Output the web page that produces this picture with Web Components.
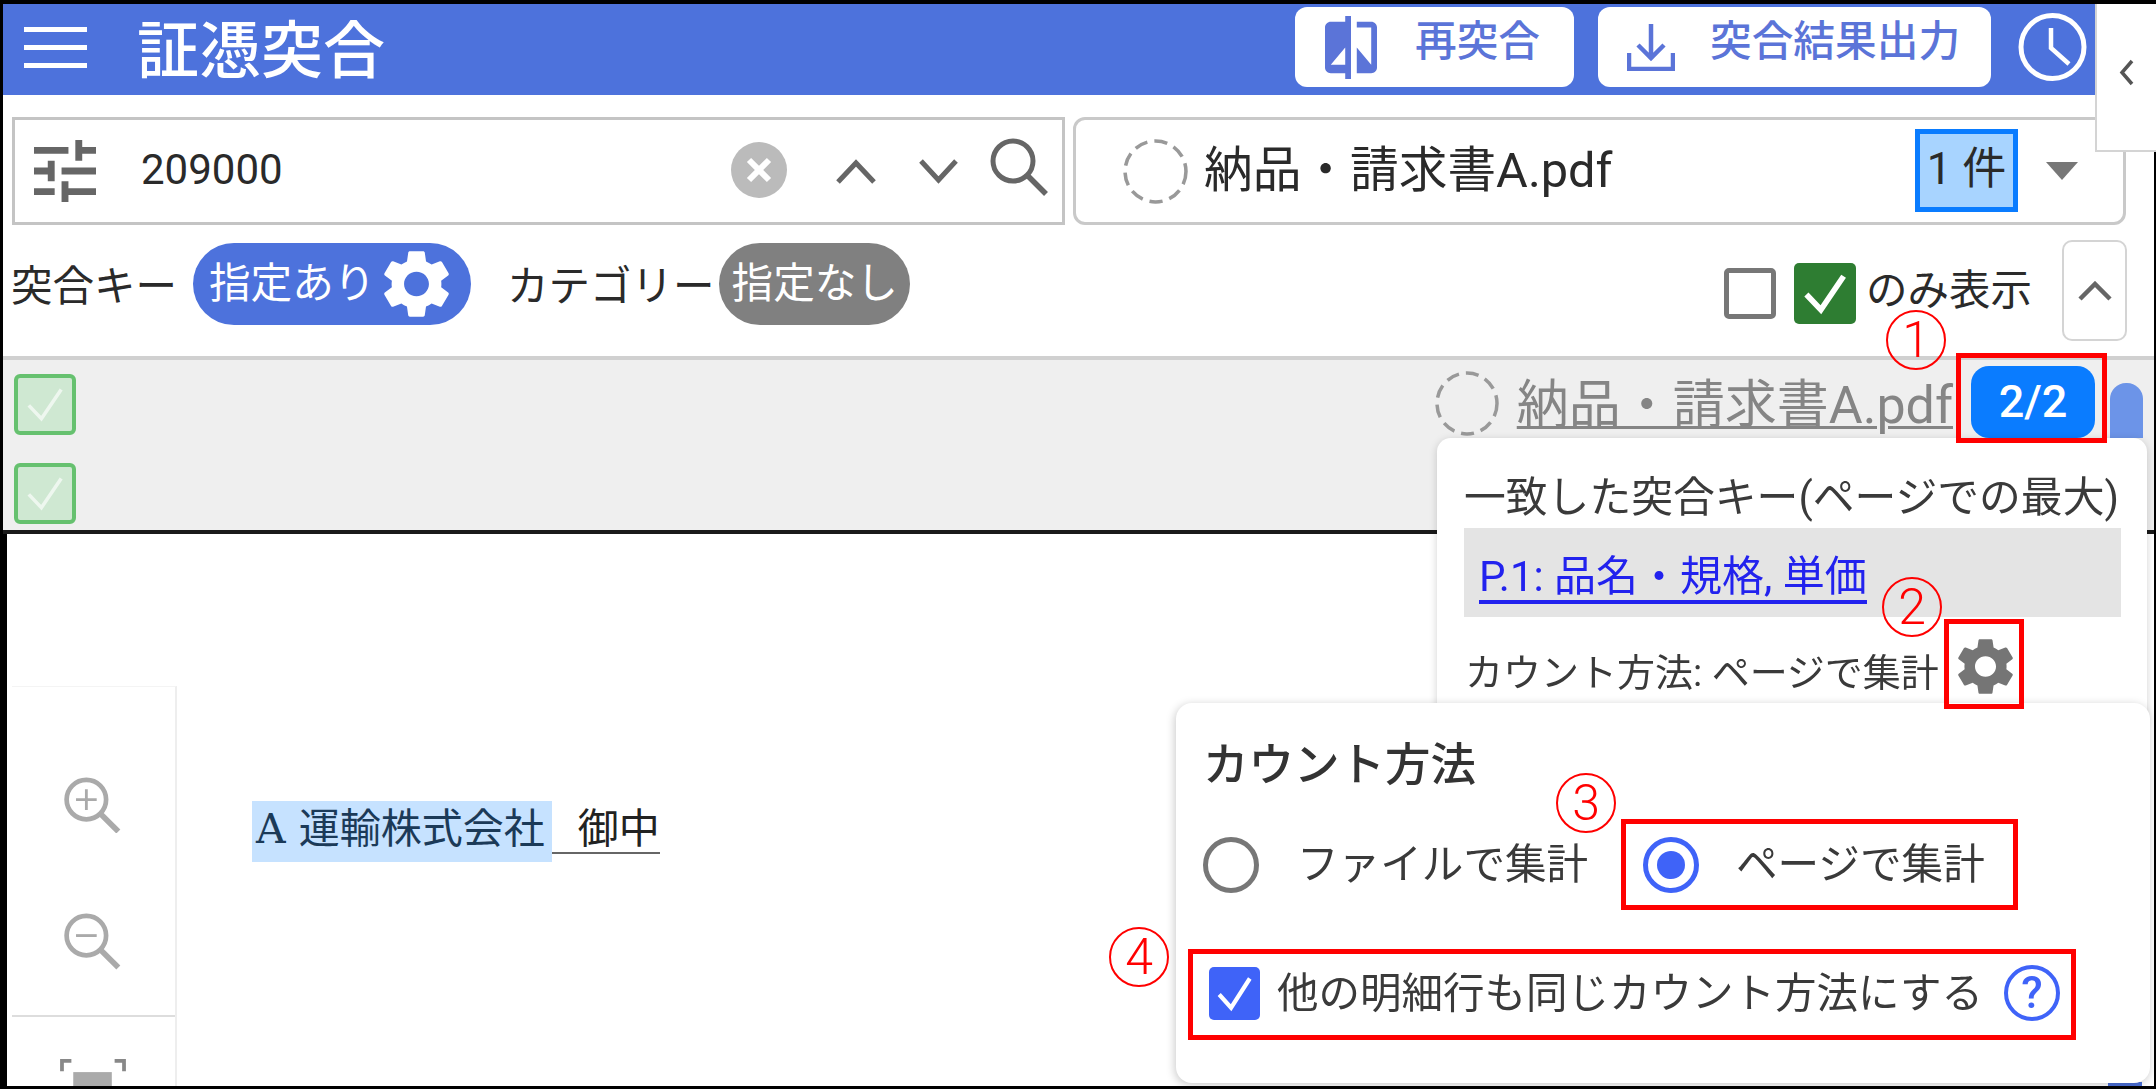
<!DOCTYPE html>
<html lang="ja">
<head>
<meta charset="utf-8">
<title>証憑突合</title>
<style>
html,body{margin:0;padding:0;background:#fff;overflow:hidden}
body{font-family:Roboto,"Noto Sans CJK JP",sans-serif;color:#333}
</style>
</head>
<body>
<page-frame>
  <app-shell>
    <app-header></app-header>
    <search-row></search-row>
    <filter-row></filter-row>
    <result-band></result-band>
    <doc-viewer></doc-viewer>
    <side-tab></side-tab>
    <peek-bar></peek-bar>
    <keys-popover></keys-popover>
    <count-popover></count-popover>
  </app-shell>
  <anno-box style="left:1956px;top:353px;width:151px;height:90px"></anno-box>
  <anno-box style="left:1944px;top:619px;width:80px;height:90px"></anno-box>
  <anno-box style="left:1621px;top:819px;width:397px;height:91px"></anno-box>
  <anno-box style="left:1188px;top:949px;width:888px;height:91px"></anno-box>
  <anno-num style="left:1886px;top:310px">1</anno-num>
  <anno-num style="left:1882px;top:577px">2</anno-num>
  <anno-num style="left:1556px;top:773px">3</anno-num>
  <anno-num style="left:1109px;top:927px">4</anno-num>
</page-frame>
<script>
const GEAR='M19.14 12.94c.04-.3.06-.61.06-.94 0-.32-.02-.64-.07-.94l2.03-1.58c.18-.14.23-.41.12-.61l-1.92-3.32c-.12-.22-.37-.29-.59-.22l-2.39.96c-.5-.38-1.03-.7-1.62-.94l-.36-2.54c-.04-.24-.24-.41-.48-.41h-3.84c-.24 0-.43.17-.47.41l-.36 2.54c-.59.24-1.13.57-1.62.94l-2.39-.96c-.22-.08-.47 0-.59.22L2.74 8.87c-.12.21-.08.47.12.61l2.03 1.58c-.05.3-.09.63-.09.94s.02.64.07.94l-2.03 1.58c-.18.14-.23.41-.12.61l1.92 3.32c.12.22.37.29.59.22l2.39-.96c.5.38 1.03.7 1.62.94l.36 2.54c.05.24.24.41.48.41h3.84c.24 0 .44-.17.47-.41l.36-2.54c.59-.24 1.13-.56 1.62-.94l2.39.96c.22.08.47 0 .59-.22l1.92-3.32c.12-.22.07-.47-.12-.61l-2.01-1.58zM12 15.6c-1.98 0-3.6-1.62-3.6-3.6s1.62-3.6 3.6-3.6 3.6 1.62 3.6 3.6-1.62 3.6-3.6 3.6z';
const gear=(w,h,c)=>`<svg width="${w}" height="${h}" viewBox="2.6 2 18.8 20" preserveAspectRatio="none" style="display:block;flex:none"><path fill="${c}" d="${GEAR}"/></svg>`;
const ring=(w,h)=>`<svg width="${w}" height="${h}" viewBox="0 0 64 66" preserveAspectRatio="none" style="display:block;flex:none"><circle cx="32" cy="33" r="30" fill="none" stroke="#999" stroke-width="3.5" stroke-dasharray="13 7"/></svg>`;
const check=(w,h,c,sw)=>`<svg width="${w}" height="${h}" viewBox="0 0 60 60" preserveAspectRatio="none" style="display:block"><path d="M12 31 L26 46 L48 13" fill="none" stroke="${c}" stroke-width="${sw}"/></svg>`;
function def(tag,html){
  customElements.define(tag,class extends HTMLElement{
    constructor(){super();const t=document.createElement('template');t.innerHTML=html;this.attachShadow({mode:'open'}).appendChild(t.content.cloneNode(true));}
  });
}
def('page-frame',`<style>:host{display:block;position:relative;width:2156px;height:1089px;overflow:hidden;background:#000}</style><slot></slot>`);
def('app-shell',`<style>:host{display:flex;flex-direction:column;position:relative;box-sizing:border-box;width:2156px;height:1089px;padding:4px 2px 3px 3px;filter:blur(.7px);font-family:Roboto,"Noto Sans CJK JP",sans-serif;color:#333;background:#000}
.in{display:flex;flex-direction:column;flex:1;min-height:0;background:#fff;overflow:hidden}</style><div class="in"><slot></slot></div>`);
def('header-btn',`<style>:host{display:flex;align-items:center;box-sizing:border-box;height:80px;margin-top:3px;background:#fff;border-radius:12px;color:#5b74d8;font-size:41.7px;font-weight:500;line-height:50px;white-space:nowrap;padding-left:var(--pad);flex:none}
.t{margin-left:var(--gap);margin-bottom:10px}</style><slot name="icon"></slot><span class="t"><slot></slot></span>`);
def('app-header',`<style>:host{display:flex;align-items:flex-start;height:91px;background:#4d72dc;color:#fff;flex:none}
.menu{display:flex;flex-direction:column;justify-content:space-between;width:63px;height:41px;margin:23px 0 0 21px}
.menu i{display:block;height:5px;background:#fff}
h1{margin:10px 0 0 50px;font-size:62px;line-height:76px;font-weight:500;flex:1;white-space:nowrap}
.clock{margin:8px 67px 0 27px;display:block;flex:none}
.b2{margin-left:24px}</style>
<div class="menu"><i></i><i></i><i></i></div><h1>証憑突合</h1>
<header-btn style="--pad:30px;--gap:38px;width:279px"><svg slot="icon" width="52" height="63" viewBox="3 1 18 22" preserveAspectRatio="none" style="display:block;flex:none"><path fill="#5b74d8" d="M10 3H5c-1.1 0-2 .9-2 2v14c0 1.1.9 2 2 2h5v2h2V1h-2v2zm0 15H5l5-6v6zm9-15h-5v2h5v13l-5-6v9h5c1.1 0 2-.9 2-2V5c0-1.1-.9-2-2-2z"/></svg>再突合</header-btn>
<header-btn class="b2" style="--pad:29px;--gap:35px;width:393px"><svg slot="icon" width="48" height="48" viewBox="0 0 48 48" style="display:block;flex:none"><path d="M24 1V34M11 22L24 35L37 22M2 30V46H46V30" fill="none" stroke="#5b74d8" stroke-width="4.5"/></svg>突合結果出力</header-btn>
<svg class="clock" width="69" height="70" viewBox="0 0 69 70"><circle cx="34.5" cy="35" r="31.5" fill="none" stroke="#fff" stroke-width="5"/><path d="M33 16V36L51 52" fill="none" stroke="#fff" stroke-width="4.5"/></svg>`);
def('search-box',`<style>:host{display:flex;align-items:center;box-sizing:border-box;width:1053px;height:108px;border:3px solid #c4c4c4;background:#fff;flex:none}
.tune{margin-left:19px;display:block;flex:none}
.v{margin:0 0 3px 45px;font-size:42px;color:#2a2a2a;flex:1}
svg{display:block;flex:none}
.clr{margin-bottom:2px}.up{margin-left:48px}.dn{margin-left:41px}.se{margin:0 14px 8px 31px}</style>
<svg class="tune" width="62" height="62" viewBox="3 3 18 18" preserveAspectRatio="none"><path fill="#666" d="M3 17v2h6v-2H3zM3 5v2h10V5H3zm10 16v-2h8v-2h-8v-2h-2v6h2zM7 9v2H3v2h4v2h2V9H7zm14 4v-2H11v2h10zm-6-4h2V7h4V5h-4V3h-2v6z"/></svg>
<span class="v">209000</span>
<svg class="clr" width="56" height="56" viewBox="0 0 56 56"><circle cx="28" cy="28" r="28" fill="#bbb"/><path d="M18 18L38 38M38 18L18 38" stroke="#fff" stroke-width="6"/></svg>
<svg class="up" width="42" height="25" viewBox="0 0 42 25"><path d="M3 23L21 4L39 23" fill="none" stroke="#666" stroke-width="5"/></svg>
<svg class="dn" width="41" height="25" viewBox="0 0 41 25"><path d="M3 2L20.5 21L38 2" fill="none" stroke="#666" stroke-width="5"/></svg>
<svg class="se" width="58" height="58" viewBox="0 0 58 58"><circle cx="23" cy="23" r="20" fill="none" stroke="#666" stroke-width="5"/><path d="M37 37L56 56" stroke="#666" stroke-width="5.5"/></svg>`);
def('file-select',`<style>:host{display:flex;align-items:center;box-sizing:border-box;width:1053px;height:108px;border:3px solid #c9c9c9;border-radius:12px;background:#fff;flex:none}
.r{margin-left:47px;display:block}
.n{margin-left:16px;font-size:48.7px;line-height:60px;flex:1;white-space:nowrap;color:#2a2a2a}
.c{box-sizing:border-box;width:103px;height:83px;border:5px solid #0a7cff;background:#a8d4ff;font-size:44px;line-height:70px;text-align:center;white-space:nowrap;margin-bottom:1px;color:#2a2a2a}
.t{width:0;height:0;margin:0 45px 0 28px;border-left:16px solid transparent;border-right:16px solid transparent;border-top:18px solid #777}</style>
<span class="r">${ring(65,67)}</span><span class="n">納品・請求書A.pdf</span><span class="c">1 件</span><span class="t"></span>`);
def('search-row',`<style>:host{display:flex;gap:8px;padding:22px 0 0 9px;flex:none}</style><search-box></search-box><file-select></file-select>`);
def('chip-pill',`<style>:host{display:flex;align-items:center;box-sizing:border-box;height:82px;border-radius:41px;background:var(--bg);color:#fff;font-size:41.6px;line-height:50px;padding-left:var(--p,16px);margin-bottom:13px;white-space:nowrap;flex:none}
::slotted(svg){margin-left:9px}</style><slot></slot>`);
def('filter-row',`<style>:host{display:flex;align-items:center;height:101px;margin-top:15px;padding:0 27px 0 8px;flex:none;font-size:41.5px;color:#2a2a2a}
span{white-space:nowrap;margin-bottom:15px;display:block}
.l2{margin-left:36px}
.sp{flex:1;margin:0}
.cb{box-sizing:border-box;width:52px;height:51px;border:5px solid #777;border-radius:5px;margin-bottom:-5px}
.gr{width:62px;height:61px;border-radius:5px;background:#2e7d32;margin:0 0 -5px 18px}
.lb{margin:-7px 0 0 10px}
.up{box-sizing:border-box;width:65px;height:101px;margin-left:30px;border:2px solid #d4d4d4;border-radius:10px;display:flex;align-items:center;justify-content:center}</style>
<span>突合キー</span><chip-pill style="--bg:#4d72dc;margin-left:16px;width:278px">指定あり<svg width="65" height="68" viewBox="2.6 2 18.8 20" preserveAspectRatio="none"><path fill="#fff" d="${GEAR}"/></svg></chip-pill>
<span class="l2">カテゴリー</span><chip-pill style="--bg:#808080;margin-left:4px;width:191px;--p:13px">指定なし</chip-pill>
<span class="sp"></span><div class="cb"></div><div class="gr">${check(62,61,'#fff',5.5)}</div><span class="lb">のみ表示</span>
<div class="up"><svg width="34" height="20" viewBox="0 0 34 20"><path d="M2 18L17 3L32 18" fill="none" stroke="#666" stroke-width="4.5"/></svg></div>`);
def('green-check',`<style>:host{display:block;box-sizing:border-box;width:62px;height:61px;border:4px solid #66c16f;border-radius:6px;background:#cfe8d2}</style>${check(54,53,'#eef7ef',4)}`);
def('result-band',`<style>:host{display:flex;justify-content:space-between;box-sizing:border-box;height:178px;margin-top:15px;border-top:4px solid #d0d0d0;border-bottom:4px solid #1a1a1a;background:#efefef;flex:none}
.l{display:flex;flex-direction:column;gap:28px;padding:14px 0 0 11px}
.r{display:flex;align-items:flex-start;padding-right:11px}
.ring{margin-top:10px}
a{display:block;margin:14px 0 0 18px;font-size:52px;line-height:64px;color:#858585;text-decoration:underline;text-decoration-thickness:3px;text-underline-offset:3px;white-space:nowrap}
.b{box-sizing:border-box;width:124px;height:72px;margin:6px 0 0 18px;border-radius:18px;background:#0a7cff;color:#fff;font-size:45px;font-weight:500;line-height:72px;text-align:center}
.t{width:33px;height:55px;margin:23px 0 0 15px;background:#6c94e8;border-radius:16px 16px 0 0}</style>
<div class="l"><green-check></green-check><green-check></green-check></div>
<div class="r"><span class="ring">${ring(64,67)}</span><a>納品・請求書A.pdf</a><div class="b">2/2</div><div class="t"></div></div>`);
def('zoom-toolbar',`<style>:host{display:flex;flex-direction:column;box-sizing:border-box;width:165px;margin:152px 0 0 5px;border-right:2px solid #eee;border-top:1px solid #f4f4f4;flex:none}
svg{display:block;margin-left:50px}
.a{margin-top:90px}.b{margin-top:80px}
hr{margin:45px 0 0;border:0;border-top:2px solid #ddd}
.c{margin:41px 0 0 46px}</style>
<svg class="a" width="60" height="60" viewBox="0 0 60 60"><circle cx="24" cy="24" r="21" fill="none" stroke="#aaa" stroke-width="5"/><path d="M39 39L58 58" stroke="#aaa" stroke-width="6"/><path d="M24 13V35M13 24H35" stroke="#aaa" stroke-width="3"/></svg>
<svg class="b" width="60" height="60" viewBox="0 0 60 60"><circle cx="24" cy="24" r="21" fill="none" stroke="#aaa" stroke-width="5"/><path d="M39 39L58 58" stroke="#aaa" stroke-width="6"/><path d="M13 24H35" stroke="#aaa" stroke-width="3"/></svg>
<hr><svg class="c" style="margin-left:46px" width="70" height="30" viewBox="0 0 70 30"><path d="M2 14V3H12M58 3H68V14" fill="none" stroke="#888" stroke-width="4"/><rect x="14" y="15" width="41" height="15" fill="#aaa"/></svg>`);
def('doc-viewer',`<style>:host{display:flex;flex:1;min-height:0;box-sizing:border-box;border-left:4px solid #000;overflow:hidden;background:#fff}
.line{margin:267px 0 0 75px;display:block;height:58px;width:409px;font-family:"DejaVu Serif","Noto Sans CJK JP",serif;font-size:41px;line-height:56px;white-space:nowrap;color:#222;flex:none}
.txt{display:inline-block;border-bottom:2px solid #666;line-height:45px;margin-left:4px;padding-top:2px}
mark{background:#c6e2ff;color:#1b3a58;padding:4px 7px 9px 4px;margin-left:-4px}</style>
<zoom-toolbar></zoom-toolbar><div class="line"><span class="txt"><mark>A 運輸株式会社</mark>&nbsp;&nbsp;御中</span></div>`);
def('side-tab',`<style>:host{position:absolute;left:2095px;top:4px;width:61px;height:148px;box-sizing:border-box;background:#fff;border-left:2px solid #d4d4d4;border-bottom:2px solid #d4d4d4;display:flex;justify-content:center;padding-top:55px}
svg{display:block}</style><svg width="16" height="27" viewBox="0 0 16 27"><path d="M13 2L3 13.5L13 25" fill="none" stroke="#555" stroke-width="3.5"/></svg>`);
def('peek-bar',`<style>:host{position:absolute;left:2108px;top:1082px;width:34px;height:4px;background:#4d72dc;display:block}</style>`);
def('keys-popover',`<style>:host{position:absolute;left:1437px;top:438px;width:710px;height:290px;box-sizing:border-box;padding:35px 26px 0 27px;background:#fff;border-radius:14px;box-shadow:0 2px 8px rgba(0,0,0,.18);color:#3a3a3a}
.h{font-size:41.8px;line-height:50px;white-space:nowrap}
.k{box-sizing:border-box;height:89px;margin-top:5px;padding:26px 0 0 15px;background:#e4e4e4}
.k a{display:inline-block;font-size:42px;line-height:46px;color:#2222ee;border-bottom:4px solid #2222ee;white-space:nowrap}
.c{display:flex;align-items:flex-start;margin-top:21px;margin-left:1px;font-size:38px;white-space:nowrap}
.c span{margin-top:10px;line-height:50px;width:493px;flex:none}</style>
<div class="h">一致した突合キー(ページでの最大)</div><div class="k"><a>P.1: 品名・規格, 単価</a></div>
<div class="c"><span>カウント方法: ページで集計</span>${gear(55,57,'#757575')}</div>`);
def('count-popover',`<style>:host{position:absolute;left:1176px;top:703px;width:974px;height:380px;box-sizing:border-box;padding:38px 0 0 27px;background:#fff;border-radius:16px;box-shadow:-1px 2px 10px rgba(0,0,0,.22);color:#3a3a3a}
.h{font-size:45.5px;line-height:50px;font-weight:500;color:#333;white-space:nowrap}
.r{display:flex;align-items:center;margin:46px 0 0 0;font-size:41.6px;line-height:56px;white-space:nowrap}
.o{box-sizing:border-box;width:56px;height:56px;border-radius:50%;border:5px solid #777;flex:none;display:flex;align-items:center;justify-content:center}
.o.s{border-color:#3f63f8;margin-left:56px}
.o.s i{display:block;width:28px;height:28px;border-radius:50%;background:#3f63f8}
.l{margin-left:38px;width:290px}
.c{display:flex;align-items:center;margin:72px 0 0 6px;font-size:41.5px;line-height:55px;white-space:nowrap}
.b{width:51px;height:53px;border-radius:5px;background:#3f63f8;flex:none}
.t{margin-left:17px;width:727px;flex:none}
.q{box-sizing:border-box;width:56px;height:56px;border:4px solid #3f63f8;border-radius:50%;color:#3f63f8;font-size:44px;line-height:48px;text-align:center;font-weight:500;flex:none}</style>
<div class="h">カウント方法</div>
<div class="r"><span class="o"></span><span class="l">ファイルで集計</span><span class="o s"><i></i></span><span class="l" style="margin-left:37px">ページで集計</span></div>
<div class="c"><span class="b">${check(51,53,'#fff',5)}</span><span class="t">他の明細行も同じカウント方法にする</span><span class="q">?</span></div>`);
def('anno-box',`<style>:host{position:absolute;box-sizing:border-box;border:5px solid #f00;display:block}</style>`);
def('anno-num',`<style>:host{position:absolute;box-sizing:border-box;width:60px;height:60px;border:2px solid #f00;border-radius:50%;color:#f00;font-family:Roboto,sans-serif;font-weight:300;font-size:50px;line-height:56px;text-align:center;display:block;background:transparent}</style><slot></slot>`);
</script>
</body>
</html>
